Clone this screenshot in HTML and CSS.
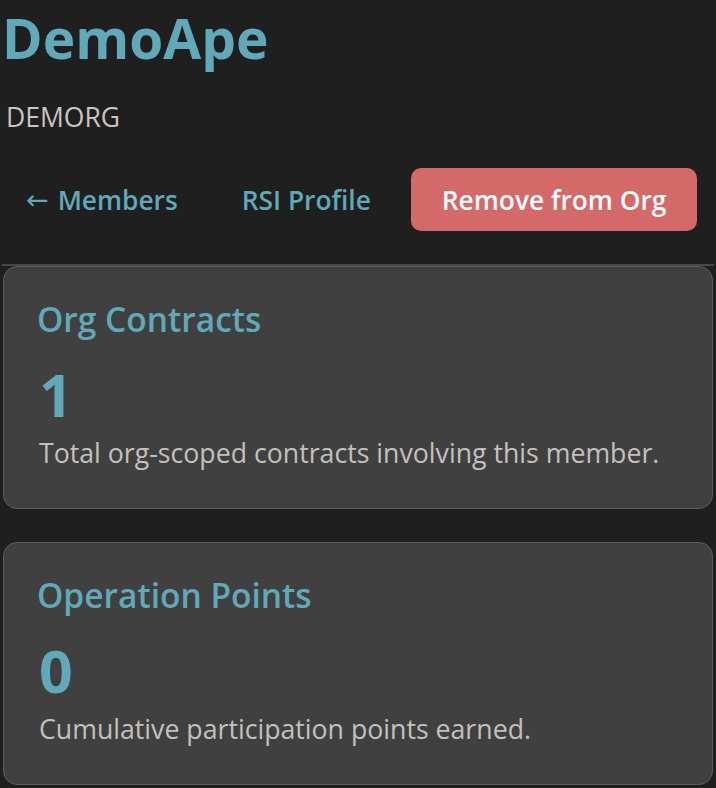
FILE: index.html
```html
<!DOCTYPE html>
<html lang="en">
<head>
<meta charset="utf-8">
<title>DemoApe</title>
<link rel="stylesheet" href="styles.css">
</head>
<body>
<main class="page">
  <header class="member-header">
    <h1 class="member-name">DemoApe</h1>
    <p class="member-org">DEMORG</p>
    <nav class="actions">
      <a class="action-link" href="#"><span class="arrow">←</span> Members</a>
      <a class="action-link" href="#">RSI Profile</a>
      <button class="action-danger" type="button">Remove from Org</button>
    </nav>
  </header>
  <section class="stats">
    <div class="stat-card">
      <h2 class="stat-title">Org Contracts</h2>
      <div class="stat-value">1</div>
      <p class="stat-desc">Total org-scoped contracts involving this member.</p>
    </div>
    <div class="stat-card">
      <h2 class="stat-title">Operation Points</h2>
      <div class="stat-value">0</div>
      <p class="stat-desc">Cumulative participation points earned.</p>
    </div>
  </section>
</main>
</body>
</html>
```
FILE: styles.css
```css
html, body {
  margin: 0;
  padding: 0;
  background: #1f1f1f;
}
body {
  font-family: "Segoe UI", "Open Sans", "Noto Sans", sans-serif;
  color: #c9c4c1;
}
.page {
  padding: 0 2px;
}
.member-name {
  margin: 0;
  font-size: 55px;
  line-height: 76px;
  font-weight: 700;
  color: #5fa9b9;
}
.member-org {
  margin: 23px 0 0 0;
  font-size: 26.5px;
  line-height: 36px;
  padding-left: 4px;
  color: #cbc4c0;
}
.actions {
  display: flex;
  align-items: center;
  gap: 16px;
  margin-top: 33px;
  padding-bottom: 33px;
  border-bottom: 2px solid #474747;
}
.action-link {
  display: flex;
  align-items: center;
  gap: 9px;
  flex: none;
  white-space: nowrap;
  height: 63px;
  padding: 0 24px;
  font-size: 26.3px;
  font-weight: 600;
  color: #5fa9b9;
  text-decoration: none;
}
.arrow {
  font-family: "DejaVu Sans", sans-serif;
  font-weight: 400;
  font-size: 27px;
}
.action-danger {
  flex: none;
  white-space: nowrap;
  height: 63px;
  padding: 0 31px;
  border: none;
  border-radius: 10px;
  background: #d4696a;
  color: #ffffff;
  font-family: inherit;
  font-size: 26.3px;
  font-weight: 600;
}
.stats {
  display: flex;
  flex-direction: column;
  gap: 33px;
  padding: 0 1px;
}
.stat-card {
  background: #404040;
  border: 1.5px solid #5c5c5c;
  border-radius: 14px;
  padding: 32px 33px 37px 33px;
}
.stat-title {
  margin: 0;
  font-size: 33.5px;
  line-height: 40px;
  font-weight: 600;
  color: #5fa9b9;
}
.stat-value {
  margin-top: 23px;
  padding-left: 2px;
  font-size: 59px;
  line-height: 64px;
  font-weight: 700;
  color: #5fa9b9;
}
.stat-desc {
  margin: 9px 0 0 0;
  padding-left: 2px;
  font-size: 26.7px;
  line-height: 36px;
  color: #c4c0bd;
}
```
